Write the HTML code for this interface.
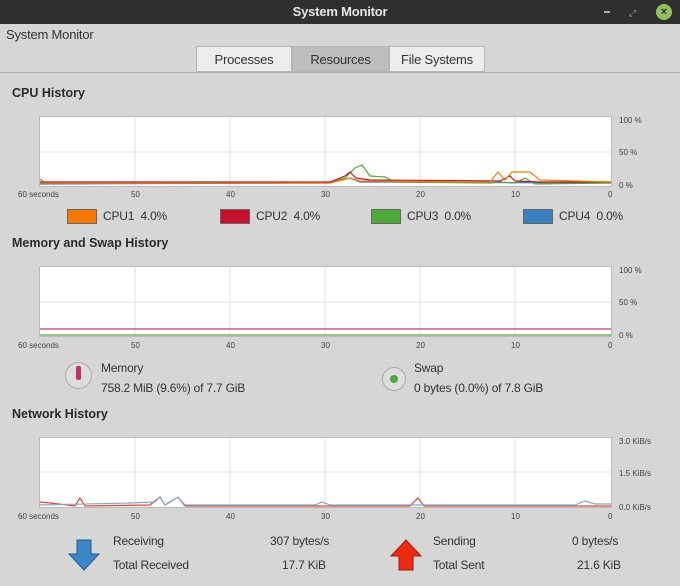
<!DOCTYPE html>
<html><head><meta charset="utf-8"><style>
body{margin:0;width:680px;height:586px;background:#d6d6d6;font-family:"Liberation Sans","DejaVu Sans",sans-serif;color:#333;position:relative;overflow:hidden}
.a{position:absolute;white-space:nowrap}
.tb{left:0;top:0;width:680px;height:24px;background:#2f2f2f;color:#e6e6e6;font-weight:bold;font-size:13px;text-align:center;line-height:24px;letter-spacing:-0.2px}
.h{font-weight:bold;font-size:12.5px;color:#2a2a2a}
.s{font-size:8px;color:#444}
.t{font-size:12px;color:#333;letter-spacing:-0.2px}
.tab{top:46px;height:26px;line-height:26px;font-size:13px;text-align:center;border:1px solid #b5b5b5;background:#ececec;box-sizing:border-box;letter-spacing:-0.2px}
.sw{width:30px;height:15px;border:1px solid #666;box-sizing:border-box}
</style></head><body>
<div class="a tb">System Monitor</div>
<div class="a" style="left:604px;top:11px;width:6px;height:2px;background:#aaa"></div>
<div class="a" style="left:629px;top:8px;color:#aaa;font-size:9px">⤢</div>
<div class="a" style="left:656px;top:4px;width:16px;height:16px;border-radius:50%;background:#8fbf5f;color:#2f2f2f;font-size:11px;font-weight:bold;text-align:center;line-height:16px">×</div>
<div class="a t" style="left:6px;top:27px;font-size:13px">System Monitor</div>
<div class="a" style="left:0;top:72px;width:680px;height:1px;background:#b0b0b0"></div>
<div class="a tab" style="left:196px;width:96px">Processes</div>
<div class="a tab" style="left:292px;width:97px;background:#bdbdbd">Resources</div>
<div class="a tab" style="left:389px;width:96px">File Systems</div>

<div class="a h" style="left:12px;top:86px">CPU History</div>
<svg class="a" style="left:0;top:0" width="680" height="586">
<g fill="#fff" stroke="#bbb"><rect x="39.5" y="116.5" width="572" height="70"/><rect x="39.5" y="266.5" width="572" height="70"/><rect x="39.5" y="437.5" width="572" height="70"/></g>
<g stroke="#e2e2e2">
<path d="M135 117V186M230 117V186M325 117V186M420 117V186M515 117V186M40 152H611"/>
<path d="M135 267V336M230 267V336M325 267V336M420 267V336M515 267V336M40 302H611"/>
<path d="M135 438V507M230 438V507M325 438V507M420 438V507M515 438V507M40 472H611"/>
</g>
<g fill="none" stroke-width="1.2">
<path stroke="#3a7fc0" d="M40 184 L330 183 L350 178 L360 182 L611 183"/>
<path stroke="#4caa3a" d="M40 179 L45 183 L330 182 L345 178 L355 168 L362 165 L370 176 L385 177 L395 182 L490 183 L500 182 L515 183 L525 178 L535 184 L611 183"/>
<path stroke="#c8102e" d="M40 182 L330 182 L345 176 L350 172 L356 178 L370 180 L500 181 L510 176 L515 181 L540 182 L611 182"/>
<path stroke="#f57900" d="M40 183 L330 183 L350 178 L360 181 L490 182 L498 172 L505 180 L512 172 L530 172 L540 180 L611 182"/>
<path stroke="#d0588c" d="M40 329H611" stroke-width="1.5"/>
<path stroke="#4caa3a" d="M40 335H611"/>
<path stroke="#e4432b" d="M40 502 L50 503 L75 506 L80 498 L85 506 L150 505 L160 497 L165 505 L178 497 L185 506 L410 506 L418 498 L424 506 L611 506"/>
<path stroke="#7fa8d0" d="M40 505 L130 503 L155 502 L160 497 L165 505 L178 497 L185 505 L315 505 L322 502 L330 505 L575 505 L585 501 L595 504 L611 504"/>
</g>
</svg>
<div class="a s" style="left:619px;top:116px">100 %</div>
<div class="a s" style="left:619px;top:148px">50 %</div>
<div class="a s" style="left:619px;top:181px">0 %</div>
<div class="a s" style="left:18px;top:190px">60 seconds</div>
<div class="a s" style="left:131px;top:190px">50</div><div class="a s" style="left:226px;top:190px">40</div><div class="a s" style="left:321px;top:190px">30</div><div class="a s" style="left:416px;top:190px">20</div><div class="a s" style="left:511px;top:190px">10</div><div class="a s" style="left:608px;top:190px">0</div>
<div class="a sw" style="left:67px;top:209px;background:#f57900"></div><div class="a t" style="left:103px;top:209px">CPU1&nbsp; 4.0%</div>
<div class="a sw" style="left:220px;top:209px;background:#c8102e"></div><div class="a t" style="left:256px;top:209px">CPU2&nbsp; 4.0%</div>
<div class="a sw" style="left:371px;top:209px;background:#4caa3a"></div><div class="a t" style="left:407px;top:209px">CPU3&nbsp; 0.0%</div>
<div class="a sw" style="left:523px;top:209px;background:#3a7fc0"></div><div class="a t" style="left:559px;top:209px">CPU4&nbsp; 0.0%</div>

<div class="a h" style="left:12px;top:236px">Memory and Swap History</div>
<div class="a s" style="left:619px;top:266px">100 %</div>
<div class="a s" style="left:619px;top:298px">50 %</div>
<div class="a s" style="left:619px;top:331px">0 %</div>
<div class="a s" style="left:18px;top:341px">60 seconds</div>
<div class="a s" style="left:131px;top:341px">50</div><div class="a s" style="left:226px;top:341px">40</div><div class="a s" style="left:321px;top:341px">30</div><div class="a s" style="left:416px;top:341px">20</div><div class="a s" style="left:511px;top:341px">10</div><div class="a s" style="left:608px;top:341px">0</div>
<div class="a" style="left:65px;top:362px;width:27px;height:27px;border-radius:50%;border:1px solid #aaa;background:#ddd;box-sizing:border-box"></div>
<div class="a" style="left:76px;top:366px;width:5px;height:14px;background:#c0306a;border-radius:2px"></div>
<div class="a" style="left:382px;top:367px;width:24px;height:24px;border-radius:50%;border:1px solid #aaa;background:#ddd;box-sizing:border-box"></div>
<div class="a" style="left:390px;top:375px;width:8px;height:8px;border-radius:50%;background:#4caa3a"></div>
<div class="a t" style="left:101px;top:361px">Memory</div>
<div class="a t" style="left:101px;top:381px">758.2 MiB (9.6%) of 7.7 GiB</div>
<div class="a t" style="left:414px;top:361px">Swap</div>
<div class="a t" style="left:414px;top:381px">0 bytes (0.0%) of 7.8 GiB</div>

<div class="a h" style="left:12px;top:407px">Network History</div>
<div class="a s" style="left:619px;top:437px">3.0 KiB/s</div>
<div class="a s" style="left:619px;top:469px">1.5 KiB/s</div>
<div class="a s" style="left:619px;top:503px">0.0 KiB/s</div>
<div class="a s" style="left:18px;top:512px">60 seconds</div>
<div class="a s" style="left:131px;top:512px">50</div><div class="a s" style="left:226px;top:512px">40</div><div class="a s" style="left:321px;top:512px">30</div><div class="a s" style="left:416px;top:512px">20</div><div class="a s" style="left:511px;top:512px">10</div><div class="a s" style="left:608px;top:512px">0</div>
<svg class="a" style="left:68px;top:538px" width="34" height="34"><path d="M9 2H23V16H31L16 32L1 16H9Z" fill="#3a86c8" stroke="#245a8c"/></svg>
<svg class="a" style="left:390px;top:538px" width="34" height="34"><path d="M9 32H23V18H31L16 2L1 18H9Z" fill="#ee2a10" stroke="#9c1a0a"/></svg>
<div class="a t" style="left:113px;top:534px">Receiving</div>
<div class="a t" style="left:113px;top:558px">Total Received</div>
<div class="a t" style="left:270px;top:534px">307 bytes/s</div>
<div class="a t" style="left:282px;top:558px">17.7 KiB</div>
<div class="a t" style="left:433px;top:534px">Sending</div>
<div class="a t" style="left:433px;top:558px">Total Sent</div>
<div class="a t" style="left:572px;top:534px">0 bytes/s</div>
<div class="a t" style="left:577px;top:558px">21.6 KiB</div>
</body></html>
